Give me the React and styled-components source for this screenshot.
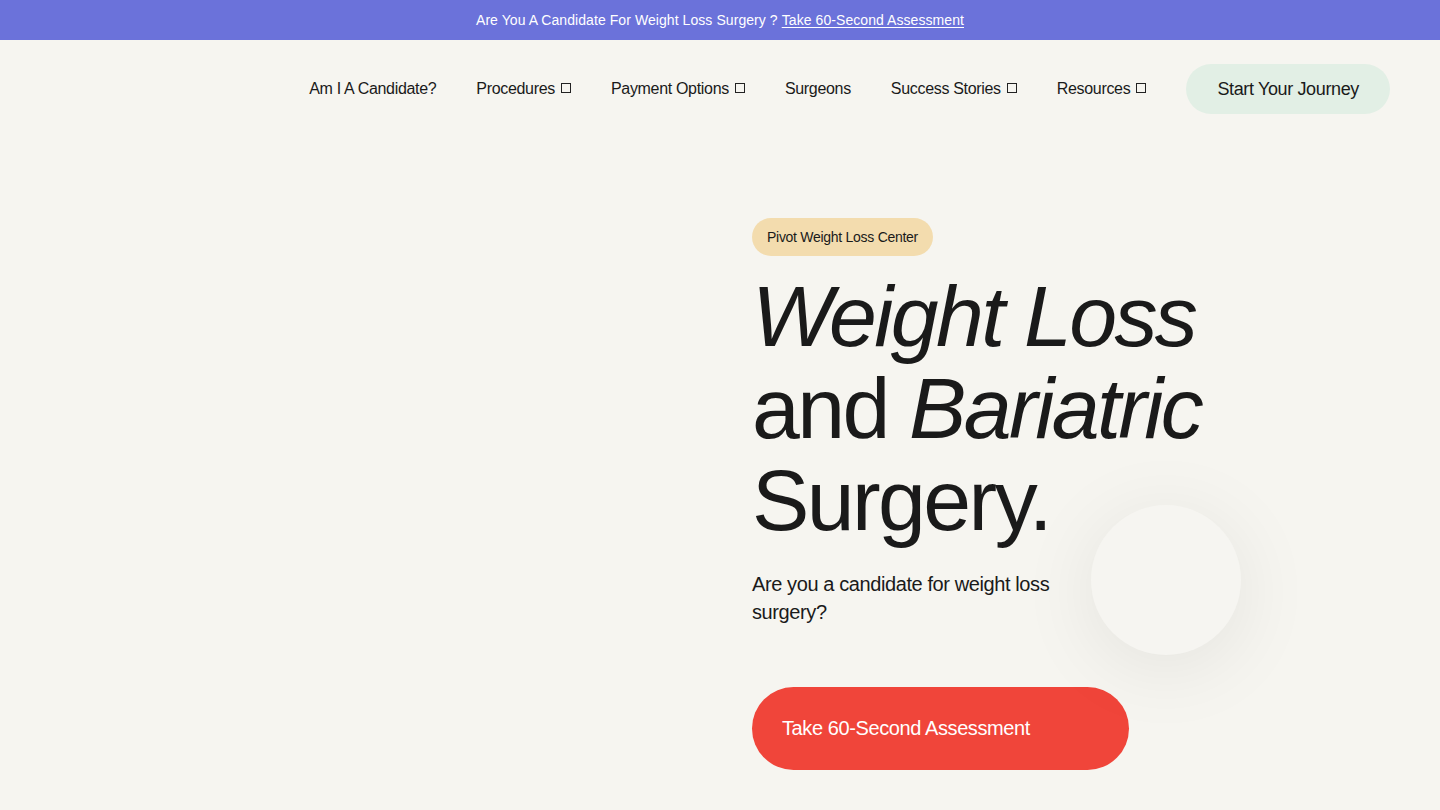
import React from 'react';
import styled, { createGlobalStyle } from 'styled-components';

const GlobalStyle = createGlobalStyle`
  html, body {
    margin: 0;
    padding: 0;
    background: #f6f5f0;
    color: #1a1a1a;
    font-family: "Liberation Sans", Arial, Helvetica, sans-serif;
    -webkit-font-smoothing: antialiased;
  }
  * {
    box-sizing: border-box;
  }
`;

const Page = styled.div`
  min-height: 810px;
  overflow: hidden;
`;

const Announcement = styled.div`
  height: 40px;
  display: flex;
  align-items: center;
  justify-content: center;
  background: #6b72da;
  color: #fff;
  font-size: 14px;
  letter-spacing: 0.005em;
  a {
    color: #fff;
    text-decoration: underline;
    text-underline-offset: 2px;
    margin-left: 4px;
  }
`;

const Header = styled.header`
  display: flex;
  align-items: center;
  justify-content: flex-end;
  gap: 40px;
  padding: 24px 50px;
`;

const NavLink = styled.a`
  display: inline-flex;
  align-items: center;
  font-size: 16px;
  letter-spacing: -0.02em;
  color: #1a1a1a;
  text-decoration: none;
  white-space: nowrap;
`;

const Caret = styled.span`
  display: inline-block;
  width: 10px;
  height: 10px;
  margin-left: 6px;
  margin-top: -3px;
  border: 1.5px solid #222;
`;

const JourneyButton = styled.a`
  display: inline-flex;
  align-items: center;
  justify-content: center;
  height: 50px;
  padding: 0 31px;
  border-radius: 25px;
  background: #e2efe5;
  color: #1a1a1a;
  font-size: 18px;
  letter-spacing: -0.02em;
  text-decoration: none;
  white-space: nowrap;
`;

const Hero = styled.section`
  display: grid;
  grid-template-columns: 1fr 1fr;
  column-gap: 64px;
  padding: 80px 50px 0;
`;

const Media = styled.div``;

const Content = styled.div`
  position: relative;
`;

const Badge = styled.span`
  display: inline-flex;
  align-items: center;
  height: 38px;
  padding: 0 15px;
  border-radius: 19px;
  background: #f3dcae;
  font-size: 14px;
  letter-spacing: -0.02em;
  color: #1a1a1a;
`;

const Title = styled.h1`
  margin: 14px 0 0;
  font-size: 86px;
  font-weight: 400;
  line-height: 92px;
  letter-spacing: -0.03em;
  color: #1a1a1a;
  em {
    font-style: italic;
  }
`;

const Lead = styled.p`
  margin: 24px 0 0;
  max-width: 330px;
  font-size: 20px;
  line-height: 28px;
  letter-spacing: -0.02em;
  color: #1a1a1a;
`;

const AssessButton = styled.a`
  display: flex;
  align-items: center;
  width: 377px;
  height: 83px;
  margin-top: 61px;
  padding: 0 30px;
  border-radius: 42px;
  background: #f0453a;
  color: #fff;
  font-size: 20px;
  letter-spacing: -0.02em;
  text-decoration: none;
`;

const Orb = styled.div`
  position: absolute;
  left: 339px;
  top: 287px;
  width: 150px;
  height: 150px;
  border-radius: 50%;
  background: #f6f5f1;
  box-shadow: 0 12px 80px rgba(0, 0, 0, 0.08);
`;

const navItems = [
  { label: 'Am I A Candidate?' },
  { label: 'Procedures', menu: true },
  { label: 'Payment Options', menu: true },
  { label: 'Surgeons' },
  { label: 'Success Stories', menu: true },
  { label: 'Resources', menu: true },
];

const App = () => (
  <Page>
    <GlobalStyle />
    <Announcement>
      Are You A Candidate For Weight Loss Surgery ?
      <a href="#assessment">Take 60-Second Assessment</a>
    </Announcement>

    <Header>
      {navItems.map((item) => (
        <NavLink key={item.label} href="#">
          {item.label}
          {item.menu && <Caret />}
        </NavLink>
      ))}
      <JourneyButton href="#">Start Your Journey</JourneyButton>
    </Header>

    <Hero>
      <Media />
      <Content>
        <Badge>Pivot Weight Loss Center</Badge>
        <Title>
          <em>Weight Loss</em>
          <br />
          and <em>Bariatric</em>
          <br />
          Surgery.
        </Title>
        <Lead>Are you a candidate for weight loss surgery?</Lead>
        <AssessButton href="#assessment">Take 60-Second Assessment</AssessButton>
        <Orb />
      </Content>
    </Hero>
  </Page>
);

export default App;
